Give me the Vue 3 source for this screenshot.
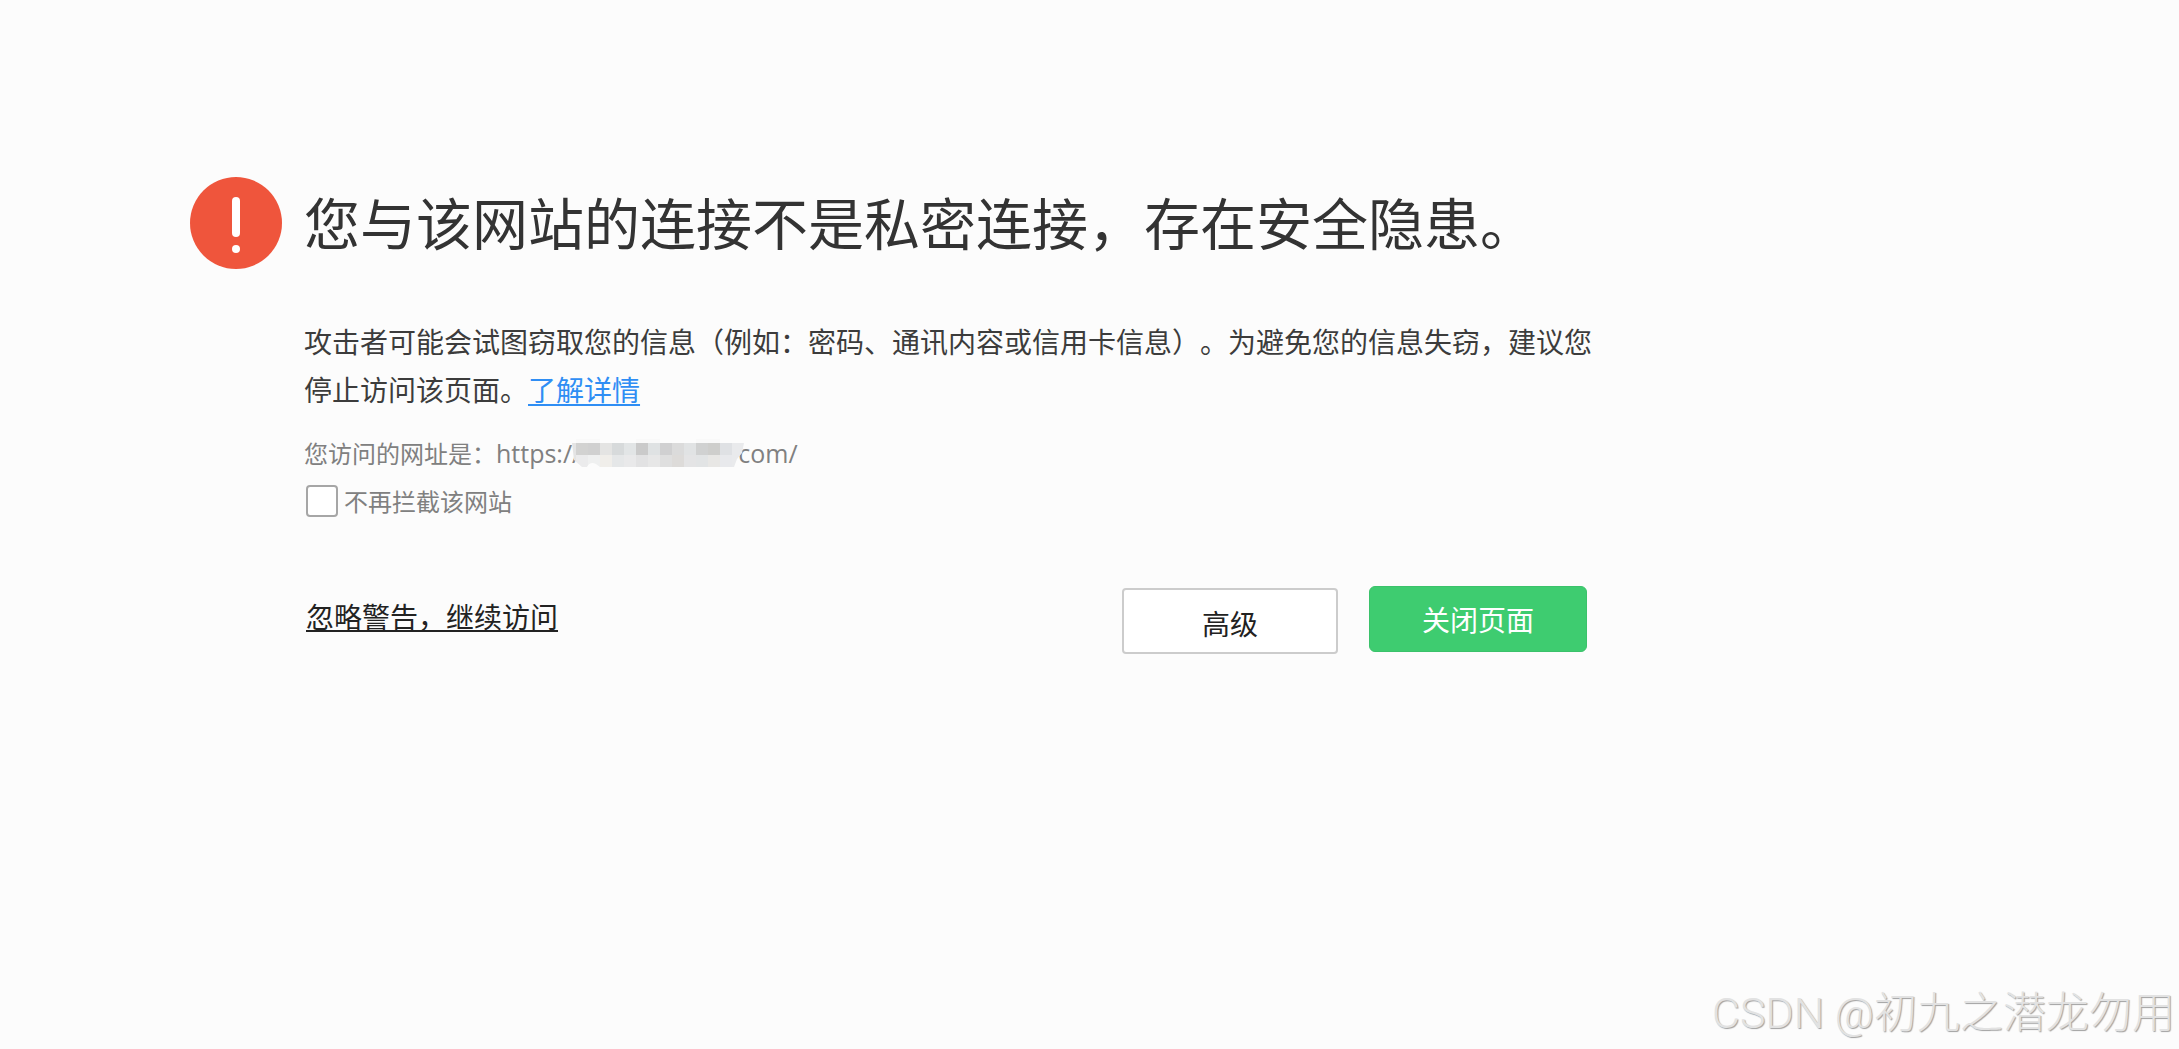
<script setup>
import { ref } from 'vue'

const skipSite = ref(false)

const topCells = ['#d2d2d1', '#d0d0d0', '#e4e4e3', '#d7dadb', '#e2e5e6', '#cacaca', '#dfe2e3', '#d0d0d1', '#dbdbdb', '#e1e3e4', '#d0d1d1', '#cececc', '#dfe1e4', '#e9eaec']
const bottomCells = ['#ebebec', '#eff0f0', '#f0eeea', '#e5e7e8', '#e9e9ea', '#e2e2e3', '#e7e7e7', '#dfdfdf', '#dddbd9', '#e4e4e5', '#e2e4e5', '#e8e7e5', '#e8e9ec', '#e9eaec']
</script>

<template>
  <div class="page">
    <main class="warning">
      <svg class="alert" viewBox="0 0 92 92" aria-hidden="true">
        <circle cx="46" cy="46" r="46" fill="#ef553c" />
        <rect x="42" y="20" width="8" height="40" rx="4" fill="#fff" />
        <circle cx="46" cy="72" r="4" fill="#fff" />
      </svg>
      <div class="content">
        <h1>您与该网站的连接不是私密连接，存在安全隐患。</h1>
        <p class="lead">
          攻击者可能会试图窃取您的信息（例如：密码、通讯内容或信用卡信息）。为避免您的信息失窃，建议您停止访问该页面。<a href="#details">了解详情</a>
        </p>
        <p class="address">
          <span>您访问的网址是：</span><span class="latin">https://</span>
          <svg class="mosaic" viewBox="0 -4 172 36" aria-hidden="true">
            <defs>
              <clipPath id="smudge">
                <path d="M0 4H172L170 14L165 20L162 28H28L24 25Q18 22 15 28H10L2 21Z" />
              </clipPath>
            </defs>
            <g fill="#f9f9f9">
              <rect x="4" y="0" width="24" height="4" />
              <rect x="64" y="0" width="24" height="4" />
              <rect x="124" y="0" width="24" height="4" />
            </g>
            <g clip-path="url(#smudge)" shape-rendering="crispEdges">
              <rect width="4" height="32" fill="#e4e4e4" />
              <rect v-for="(c, i) in topCells" :key="'t' + i" :x="4 + i * 12" y="4" width="12" height="12" :fill="c" />
              <rect v-for="(c, i) in bottomCells" :key="'b' + i" :x="4 + i * 12" y="16" width="12" height="12" :fill="c" />
            </g>
          </svg>
          <span class="latin">com/</span>
        </p>
        <div class="skip">
          <input id="skip-site" v-model="skipSite" type="checkbox" />
          <label for="skip-site">不再拦截该网站</label>
        </div>
        <div class="actions">
          <a class="ignore" href="#continue">忽略警告，继续访问</a>
          <div class="buttons">
            <button type="button" class="advanced">高级</button>
            <button type="button" class="close">关闭页面</button>
          </div>
        </div>
      </div>
    </main>
    <footer class="watermark">CSDN @初九之潜龙勿用</footer>
  </div>
</template>

<style>
body {
  background: #fcfcfc;
}
</style>

<style scoped>
.page {
  position: relative;
  box-sizing: border-box;
  min-height: 100vh;
  padding: 177px 24px 24px 190px;
  color: #333;
  font-family: "Noto Sans CJK SC", sans-serif;
  text-spacing-trim: space-all;
}

.warning {
  display: flex;
  align-items: flex-start;
  gap: 22px;
}

.alert {
  flex: none;
  width: 92px;
  height: 92px;
}

.content {
  flex: 1;
  min-width: 0;
  max-width: 1295px;
}

h1 {
  margin: 0;
  font-size: 56px;
  font-weight: 400;
  line-height: 88px;
}

.lead {
  margin: 52px 0 0;
  color: #3c3c3c;
  font-size: 28px;
  line-height: 48px;
}

.lead a {
  color: #2f8ef4;
  text-decoration-thickness: 2px;
  text-underline-offset: 3px;
}

.address {
  display: flex;
  align-items: center;
  margin: 16px 0 0;
  color: #808080;
  font-size: 24px;
  line-height: 48px;
}

.latin {
  font-family: "Open Sans", sans-serif;
  font-size: 25px;
}

.mosaic {
  flex: none;
  position: relative;
  width: 172px;
  height: 36px;
  margin: 0 -6px 0 -9px;
}

.skip {
  display: flex;
  align-items: center;
  gap: 6px;
  padding-left: 2px;
  color: #808080;
  font-size: 24px;
  line-height: 48px;
}

.skip input {
  appearance: none;
  box-sizing: border-box;
  width: 32px;
  height: 32px;
  margin: 0;
  border: 2px solid #a6a6a6;
  border-radius: 4px;
  background: #fff;
}

.skip input:checked {
  background: #3ecc70;
}

.actions {
  display: flex;
  align-items: flex-start;
  justify-content: space-between;
  margin-top: 61px;
  padding: 0 12px 0 2px;
}

.ignore {
  margin-top: 10px;
  color: #222;
  font-size: 28px;
  line-height: 40px;
  text-decoration-thickness: 2px;
  text-decoration-skip-ink: none;
  text-underline-offset: 2px;
}

.buttons {
  display: flex;
  gap: 31px;
}

button {
  box-sizing: border-box;
  height: 66px;
  padding: 0;
  font-family: inherit;
  font-size: 28px;
  line-height: 40px;
}

.advanced {
  width: 216px;
  margin-top: 2px;
  padding-top: 4px;
  border: 2px solid #ccc;
  border-radius: 4px;
  background: #fff;
  color: #222;
}

.close {
  width: 218px;
  border: 1px solid #3bc26b;
  border-radius: 6px;
  background: #3ecc70;
  color: #fff;
}

.watermark {
  position: absolute;
  right: 4px;
  bottom: 6px;
  color: #e2e2e2;
  font-family: Roboto, "Noto Sans CJK SC", sans-serif;
  font-size: 43px;
  font-weight: 300;
  line-height: 60px;
  text-shadow: 1px 1px 1px #a0a0a0;
  white-space: nowrap;
}
</style>
